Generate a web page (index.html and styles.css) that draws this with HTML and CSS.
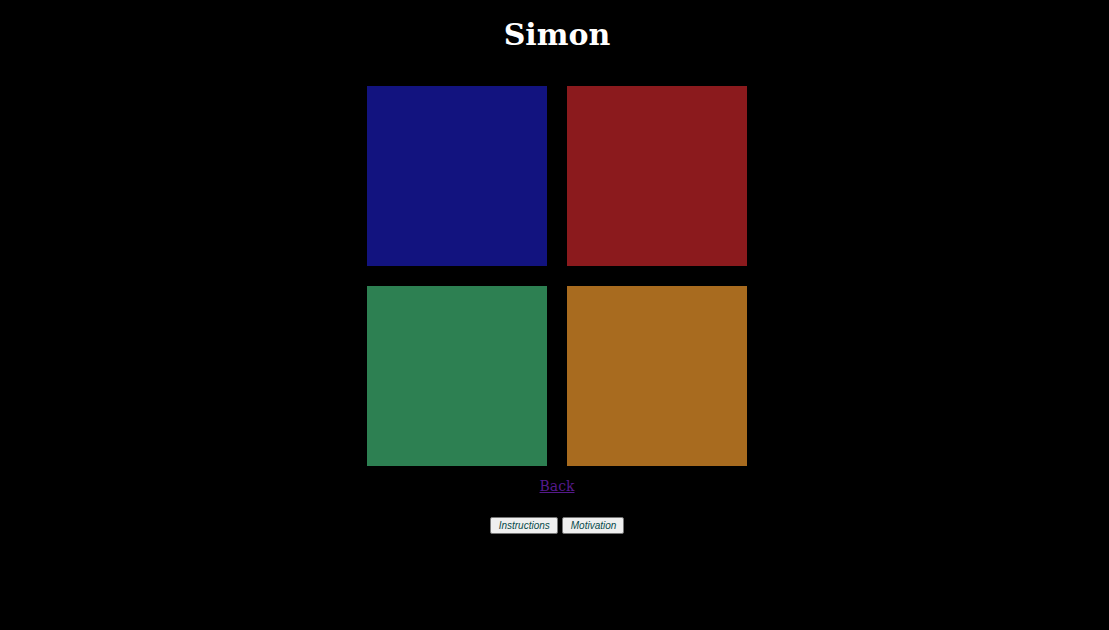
FILE: index.html
```html
<!DOCTYPE html>
<html>
<head>
<meta charset="utf-8">
<title>Simon</title>
<link rel="stylesheet" href="styles.css">
</head>
<body>
<main class="page">
  <h1 class="title">Simon</h1>
  <div class="board">
    <div class="pad pad-blue"></div>
    <div class="pad pad-red"></div>
    <div class="pad pad-green"></div>
    <div class="pad pad-orange"></div>
  </div>
  <a class="back" href="#">Back</a>
  <div class="actions">
    <button class="btn">Instructions</button>
    <button class="btn">Motivation</button>
  </div>
</main>
</body>
</html>
```
FILE: styles.css
```css
html, body {
  margin: 0;
  background: #000;
}
body {
  padding-left: 5px;
  font-family: "DejaVu Serif", Georgia, serif;
}
.page {
  display: flex;
  flex-direction: column;
  align-items: center;
}
.title {
  margin: 17px 0 0;
  font-size: 30px;
  line-height: 36px;
  font-weight: bold;
  color: #fff;
}
.board {
  margin-top: 33px;
  display: grid;
  grid-template-columns: 180px 180px;
  grid-auto-rows: 180px;
  gap: 20px;
}
.pad-blue { background: #12137f; }
.pad-red { background: #8b1a1d; }
.pad-green { background: #2d8052; }
.pad-orange { background: #a86b1f; }
.back {
  margin-top: 10px;
  font-size: 14px;
  line-height: 20px;
  color: #551a8b;
}
.actions {
  margin-top: 21px;
  display: flex;
  gap: 4px;
}
.btn {
  height: 17px;
  padding: 0 7px 0 8px;
  font-family: "Liberation Sans", Arial, sans-serif;
  font-style: italic;
  font-size: 10px;
  color: #064a4a;
  background: #efefef;
  border: 1px solid #767676;
  border-radius: 2px;
}
```
